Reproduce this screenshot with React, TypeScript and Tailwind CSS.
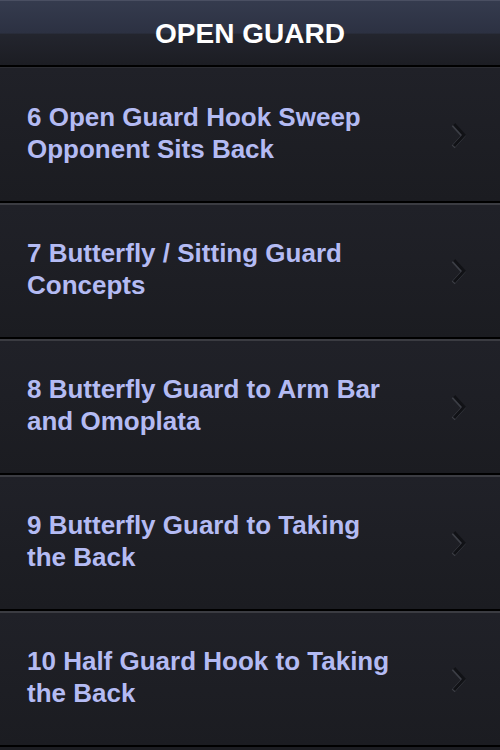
import React from "react";

const items = [
  "6 Open Guard Hook Sweep Opponent Sits Back",
  "7 Butterfly / Sitting Guard Concepts",
  "8 Butterfly Guard to Arm Bar and Omoplata",
  "9 Butterfly Guard to Taking the Back",
  "10 Half Guard Hook to Taking the Back",
];

function Chevron() {
  return (
    <svg width="18" height="28" viewBox="0 0 18 28" className="shrink-0">
      <polyline points="4,3 14,14 4,25" fill="none" stroke="#3c3e46" strokeWidth="4" strokeLinejoin="miter" strokeLinecap="butt" transform="translate(-0.8,0.8)" />
      <polyline points="4,3 14,14 4,25" fill="none" stroke="#111216" strokeWidth="3" strokeLinejoin="miter" strokeLinecap="butt" />
    </svg>
  );
}

export default function App() {
  return (
    <div className="w-[500px] h-[750px] overflow-hidden bg-[#1c1d22]" style={{ fontFamily: '"Liberation Sans", Arial, sans-serif' }}>
      <div className="h-[65px] border-t border-[#4a4f62] bg-[linear-gradient(to_bottom,#353b4e_0%,#2c3142_50%,#23252e_52%,#1c1d23_100%)] flex items-center justify-center">
        <span className="text-white font-bold text-[28px] leading-none mt-[2px]">OPEN GUARD</span>
      </div>
      <div className="h-[2px] bg-black" />
      {items.map((t, i) => (
        <div key={i}>
          <div className={i === 0 ? "h-[1px] bg-[#2c2d33]" : "h-[2px] bg-[#3b3c42]"} />
          <div className={(i === 0 ? "h-[133px]" : "h-[132px]") + " bg-[linear-gradient(to_bottom,#202128,#1b1c21)] flex items-center pl-[27px] pr-[32px]"}>
            <div className="flex-1 mb-[4px]">
              <div className="max-w-[374px] text-[26px] leading-[32px] font-bold text-[#b4bbf3]">{t}</div>
            </div>
            <Chevron />
          </div>
          <div className="h-[2px] bg-black" />
        </div>
      ))}
    </div>
  );
}
